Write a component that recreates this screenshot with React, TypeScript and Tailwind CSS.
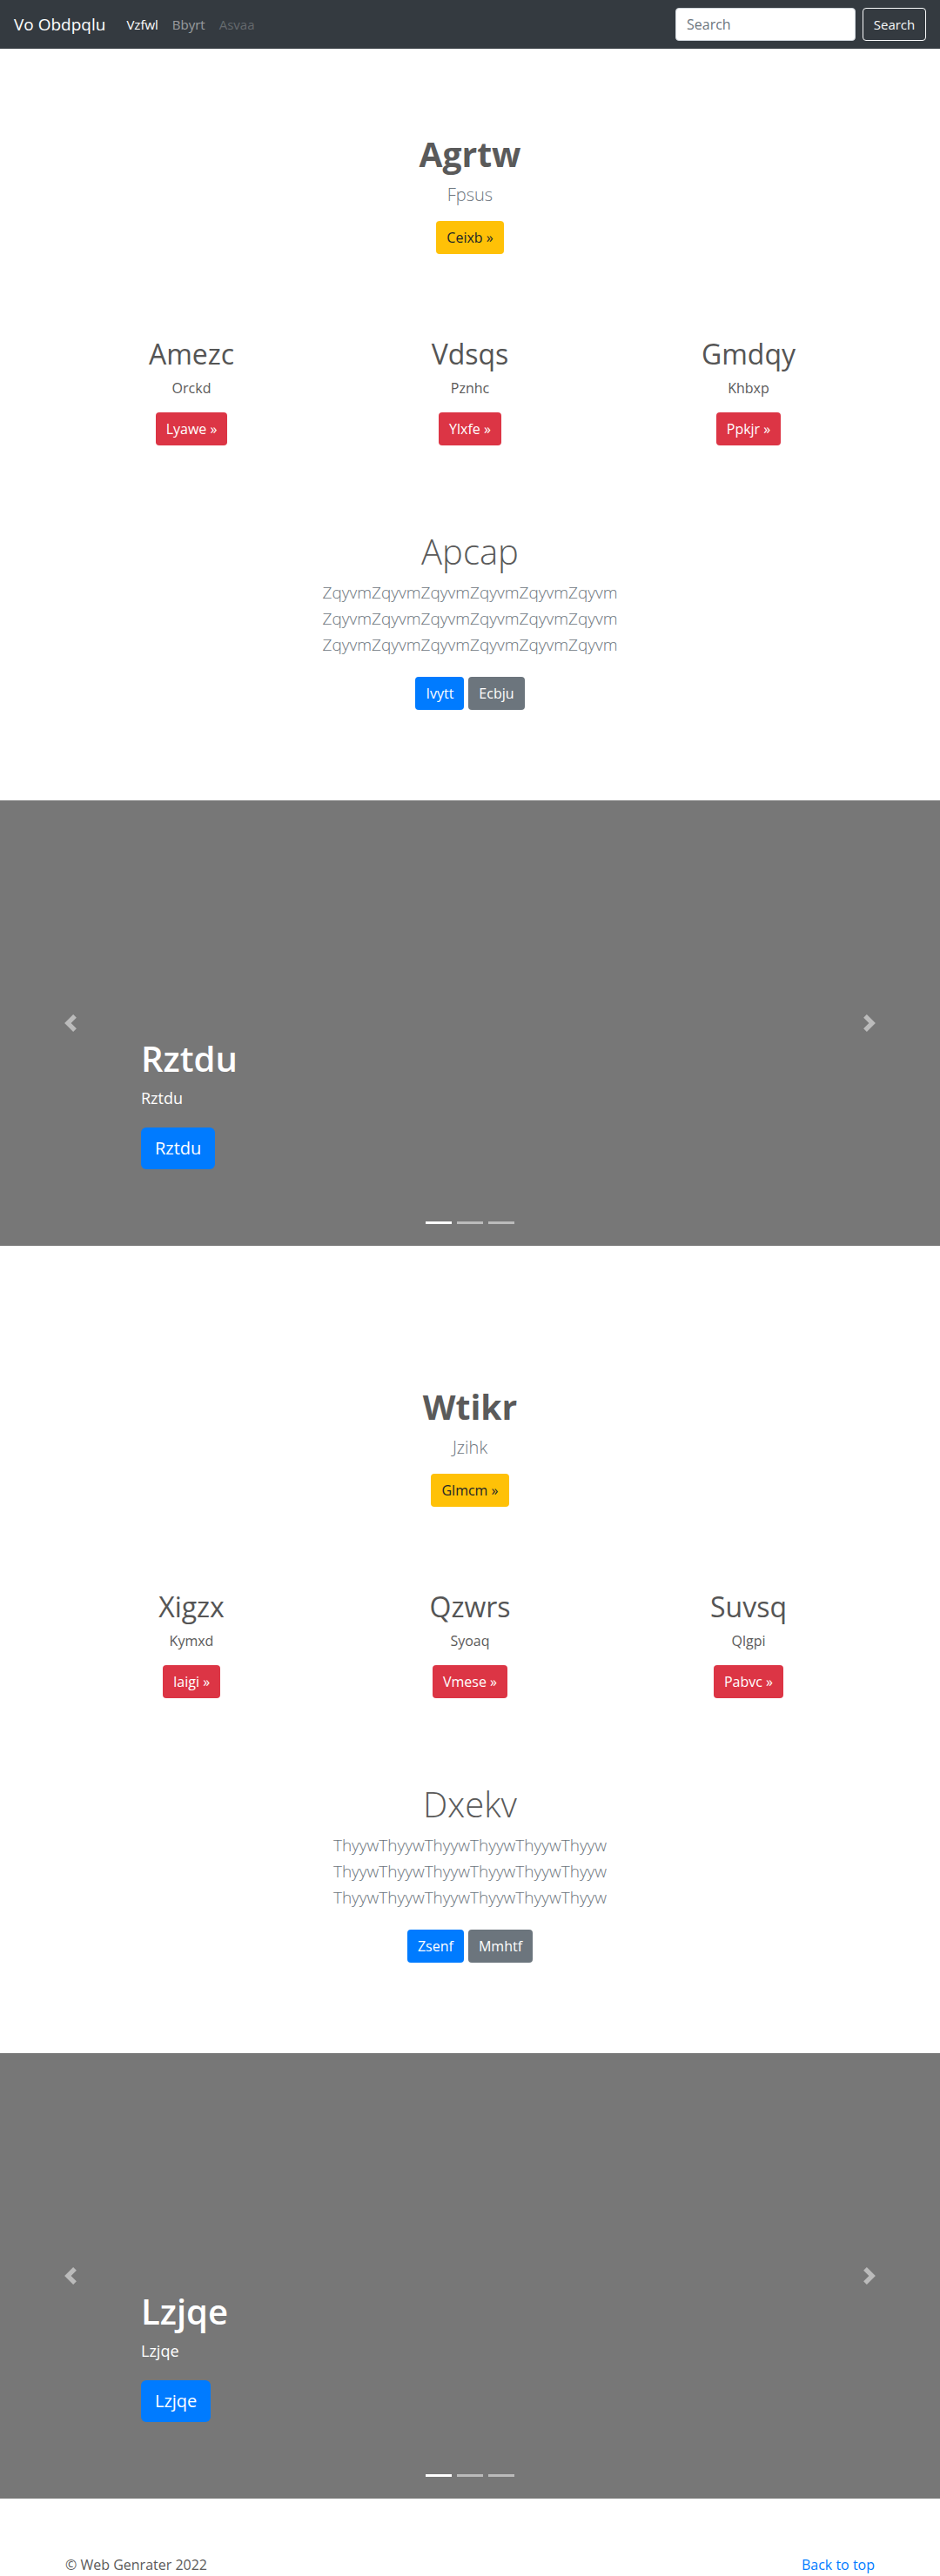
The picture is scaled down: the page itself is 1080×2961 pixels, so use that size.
import React from "react";

const FONT = "font-['Open_Sans','Noto_Sans','Liberation_Sans',sans-serif]";

type Col = { title: string; sub: string; btn: string };

type BlockProps = {
  hero: string;
  heroSub: string;
  heroBtn: string;
  cols: Col[];
  feature: string;
  word: string;
  btnA: string;
  btnB: string;
};

function Block(p: BlockProps) {
  const line = p.word.repeat(6);
  return (
    <section className="h-[864px] pt-[97px] text-center">
      <h1 className="mb-2 text-[39px] font-bold leading-[48px] text-[#5a5a5a]">{p.hero}</h1>
      <p className="mb-[15px] text-[20px] font-light leading-[30px] text-[#6c757d]">{p.heroSub}</p>
      <button className="h-[38px] rounded-[4px] bg-[#ffc107] px-3 text-base leading-6 text-[#212529]">
        {p.heroBtn} »
      </button>

      <div className="mx-auto mt-[96px] grid w-[960px] grid-cols-3">
        {p.cols.map((c) => (
          <div key={c.title} className="flex flex-col items-center">
            <h2 className="mb-2 text-[32px] font-normal leading-[38px] text-[#555555]">{c.title}</h2>
            <p className="mb-4 text-base leading-6 text-[#5a5a5a]">{c.sub}</p>
            <button className="h-[38px] rounded-[4px] bg-[#dc3545] px-3 text-base leading-6 text-white">
              {c.btn} »
            </button>
          </div>
        ))}
      </div>

      <div className="mt-[98px] flex flex-col items-center">
        <h2 className="mb-2 text-[40px] font-light leading-[48px] text-[#5a5a5a]">{p.feature}</h2>
        <p className="text-[19px] font-light leading-[30px] text-[#6c757d]">
          {line}
          <br />
          {line}
          <br />
          {line}
        </p>
        <div className="mt-[22px] flex gap-[5px]">
          <button className="h-[38px] rounded-[4px] bg-[#007bff] px-3 text-base leading-6 text-white">{p.btnA}</button>
          <button className="h-[38px] rounded-[4px] bg-[#6c757d] px-3 text-base leading-6 text-white">{p.btnB}</button>
        </div>
      </div>
    </section>
  );
}

function Chevron({ dir }: { dir: "prev" | "next" }) {
  return (
    <svg width="20" height="20" viewBox="0 0 8 8" fill="#fff">
      {dir === "prev" ? (
        <path d="M5.25 0l-4 4 4 4 1.5-1.5L4.25 4l2.5-2.5L5.25 0z" />
      ) : (
        <path d="M2.75 0l-1.5 1.5L3.75 4l-2.5 2.5L2.75 8l4-4-4-4z" />
      )}
    </svg>
  );
}

function Carousel({ label }: { label: string }) {
  return (
    <section className="relative mb-16 flex h-[512px] flex-col justify-end bg-[#777777] pb-[88px] pl-[162px]">
      <div className="flex flex-col items-start">
        <h1 className="mb-2 text-[40px] font-semibold leading-[48px] text-white">{label}</h1>
        <p className="mb-[20px] text-[18px] leading-[27px] text-white">{label}</p>
        <button className="h-12 rounded-[6px] bg-[#007bff] px-4 text-[20px] leading-[30px] text-white">{label}</button>
      </div>
      <div className="absolute bottom-0 left-0 top-0 flex w-[15%] items-center justify-center opacity-50">
        <Chevron dir="prev" />
      </div>
      <div className="absolute bottom-0 right-0 top-0 flex w-[15%] items-center justify-center opacity-50">
        <Chevron dir="next" />
      </div>
      <div className="absolute bottom-[25px] left-0 right-0 flex justify-center gap-[6px]">
        <span className="h-[3px] w-[30px] bg-white" />
        <span className="h-[3px] w-[30px] bg-white/50" />
        <span className="h-[3px] w-[30px] bg-white/50" />
      </div>
    </section>
  );
}

export default function App() {
  return (
    <div className={`min-h-[2961px] bg-white ${FONT}`}>
      <nav className="flex h-14 items-center bg-[#343a40] px-4">
        <span className="mr-4 text-[19px] leading-[30px] text-white">Vo Obdpqlu</span>
        <ul className="flex text-[15px] leading-6">
          <li className="px-2 text-white">Vzfwl</li>
          <li className="px-2 text-white/50">Bbyrt</li>
          <li className="px-2 text-white/25">Asvaa</li>
        </ul>
        <form className="ml-auto flex gap-2">
          <input
            className="h-[38px] w-[207px] rounded-[4px] border border-[#ced4da] bg-white px-3 text-base text-[#495057] placeholder:text-[#6c757d]"
            placeholder="Search"
          />
          <button
            type="button"
            className="h-[38px] w-[73px] rounded-[4px] border border-[#f8f9fa] text-[15px] leading-6 text-[#f8f9fa]"
          >
            Search
          </button>
        </form>
      </nav>

      <Block
        hero="Agrtw"
        heroSub="Fpsus"
        heroBtn="Ceixb"
        cols={[
          { title: "Amezc", sub: "Orckd", btn: "Lyawe" },
          { title: "Vdsqs", sub: "Pznhc", btn: "Ylxfe" },
          { title: "Gmdqy", sub: "Khbxp", btn: "Ppkjr" },
        ]}
        feature="Apcap"
        word="Zqyvm"
        btnA="Ivytt"
        btnB="Ecbju"
      />
      <Carousel label="Rztdu" />

      <Block
        hero="Wtikr"
        heroSub="Jzihk"
        heroBtn="Glmcm"
        cols={[
          { title: "Xigzx", sub: "Kymxd", btn: "Iaigi" },
          { title: "Qzwrs", sub: "Syoaq", btn: "Vmese" },
          { title: "Suvsq", sub: "Qlgpi", btn: "Pabvc" },
        ]}
        feature="Dxekv"
        word="Thyyw"
        btnA="Zsenf"
        btnB="Mmhtf"
      />
      <Carousel label="Lzjqe" />

      <footer className="mx-auto flex w-[960px] justify-between px-[15px] text-base leading-6">
        <p className="text-[#5a5a5a]">© Web Genrater 2022</p>
        <a className="text-[#007bff]" href="#">
          Back to top
        </a>
      </footer>
    </div>
  );
}
